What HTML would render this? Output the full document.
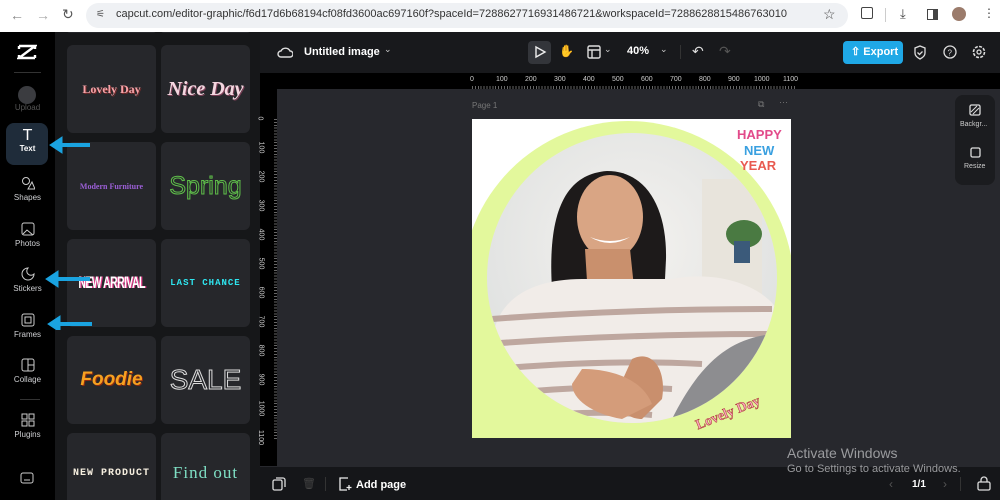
<!DOCTYPE html>
<html><head><meta charset="utf-8"><style>
*{margin:0;padding:0;box-sizing:border-box}
html,body{width:1000px;height:500px;overflow:hidden}
body{background:#27282d;font-family:"Liberation Sans",sans-serif;position:relative}
.a{position:absolute}
.card{position:absolute;width:89px;height:88px;background:#26272b;border-radius:6px;display:flex;align-items:center;justify-content:center;font-weight:bold;white-space:nowrap;overflow:hidden}
.nav{position:absolute;left:0;width:55px;text-align:center;color:#cfd0d3;font-size:8px}
.nav svg{display:block;margin:0 auto 3px}
.rh{position:absolute;top:76px;font-size:7px;color:#ccc}
.rv{position:absolute;left:258px;font-size:7px;color:#ccc;transform:rotate(90deg);transform-origin:center}
</style></head><body>
<!-- left nav -->
<div class="a" style="left:0;top:32px;width:55px;height:468px;background:#000"></div>
<svg class="a" style="left:17px;top:44px" width="20" height="16" viewBox="0 0 20 16"><path d="M2 2h16L2 14h16" stroke="#fff" stroke-width="2.4" fill="none"/><path d="M2 2v3M18 14v-3M18 2v3M2 14v-3" stroke="#fff" stroke-width="2.4"/></svg>
<div class="a" style="left:14px;top:72px;width:27px;height:1px;background:#333"></div>
<div class="a" style="left:18px;top:86px;width:18px;height:18px;border-radius:50%;background:#3b3c40"></div>
<div class="nav" style="top:103px;color:#555">Upload</div>
<div class="a" style="left:6px;top:123px;width:42px;height:42px;border-radius:8px;background:#1f2c3a"></div>
<div class="nav" style="top:128px;color:#fff;font-size:8px"><div style="font-size:16px;line-height:16px">T</div><b>Text</b></div>
<div class="nav" style="top:176px"><svg width="14" height="14"><circle cx="5" cy="5" r="3.5" stroke="#ccc" fill="none"/><path d="M7 13l4-7 3 7z" stroke="#ccc" fill="none"/></svg>Shapes</div>
<div class="nav" style="top:222px"><svg width="14" height="14"><rect x="1" y="1" width="12" height="12" rx="2" stroke="#ccc" fill="none"/><path d="M2 12l4-4 6 5" stroke="#ccc" fill="none"/></svg>Photos</div>
<div class="nav" style="top:267px"><svg width="14" height="14"><path d="M7 1a6 6 0 1 0 6 6a4 4 0 0 1-6-6z" stroke="#ccc" fill="none"/></svg>Stickers</div>
<div class="nav" style="top:313px"><svg width="14" height="14"><rect x="1" y="1" width="12" height="12" rx="2" stroke="#ccc" fill="none"/><rect x="4" y="4" width="6" height="6" stroke="#ccc" fill="none"/></svg>Frames</div>
<div class="nav" style="top:358px"><svg width="14" height="14"><rect x="1" y="1" width="12" height="12" rx="2" stroke="#ccc" fill="none"/><path d="M7 1v12M7 7h6" stroke="#ccc"/></svg>Collage</div>
<div class="a" style="left:20px;top:399px;width:20px;height:1px;background:#333"></div>
<div class="nav" style="top:413px"><svg width="14" height="14"><rect x="1" y="1" width="5" height="5" stroke="#ccc" fill="none"/><rect x="8" y="1" width="5" height="5" stroke="#ccc" fill="none"/><rect x="1" y="8" width="5" height="5" stroke="#ccc" fill="none"/><rect x="8" y="8" width="5" height="5" stroke="#ccc" fill="none"/></svg>Plugins</div>
<svg class="a" style="left:20px;top:472px" width="14" height="12"><rect x="1" y="1" width="12" height="10" rx="2" stroke="#ccc" fill="none"/><path d="M4 8h6" stroke="#ccc"/></svg>
<!-- panel -->
<div class="a" style="left:55px;top:32px;width:205px;height:468px;background:#161719"></div>
<div class="card" style="left:67px;top:28px;height:5px"></div><div class="card" style="left:161px;top:28px;height:5px"></div>
<div class="card" style="left:67px;top:45px;color:#f5a3a8;font-family:'Liberation Serif',serif;font-size:12px;text-shadow:1px 1px 0 #7a2a2a">Lovely Day</div>
<div class="card" style="left:161px;top:45px;color:#f4d7e0;font-family:'Liberation Serif',serif;font-style:italic;font-size:20px;text-shadow:1px 1px 0 #7b3e56">Nice Day</div>
<div class="card" style="left:67px;top:142px;color:#9b5fd6;font-family:'Liberation Serif',serif;font-size:8px">Modern Furniture</div>
<div class="card" style="left:161px;top:142px;color:transparent;-webkit-text-stroke:1px #5fbf4a;font-size:25px;font-weight:normal">Spring</div>
<div class="card" style="left:67px;top:239px;color:#fff;font-size:17px"><span style="display:inline-block;transform:scaleX(.62);letter-spacing:-1px;text-shadow:2px 0 0 #e23b8a">NEW ARRIVAL</span></div>
<div class="card" style="left:161px;top:239px;color:#2ee6f0;font-size:9px;letter-spacing:1px;font-family:'Liberation Mono',monospace">LAST CHANCE</div>
<div class="card" style="left:67px;top:336px;color:#f6a020;font-size:19px;font-style:italic;text-shadow:1px 1px 0 #8b2a10">Foodie</div>
<div class="card" style="left:161px;top:336px;color:transparent;-webkit-text-stroke:1px #ddd;font-size:28px;font-weight:normal">SALE</div>
<div class="card" style="left:67px;top:433px;height:80px;color:#f6efe0;font-size:10px;letter-spacing:1px;font-family:'Liberation Mono',monospace">NEW PRODUCT</div>
<div class="card" style="left:161px;top:433px;height:80px;color:#7fe0c5;font-size:17px;font-weight:normal;font-family:'Liberation Serif',serif;letter-spacing:1px">Find out</div>
<!-- arrows -->
<svg class="a" style="left:40px;top:130px" width="60" height="200"><g fill="#1aa3e0" stroke="#1aa3e0"><path d="M50 15H16" stroke-width="4"/><path d="M10 15l12-8v16z"/><path d="M50 149H14" stroke-width="4"/><path d="M6 149l12-8v16z"/><path d="M52 194H16" stroke-width="4"/><path d="M8 194l12-8v16z"/></g></svg>
<!-- chrome bar -->
<div class="a" style="left:0;top:0;width:1000px;height:32px;background:#fff"></div>
<div class="a" style="left:10px;top:7px;font-size:14px;color:#888">←</div>
<div class="a" style="left:36px;top:7px;font-size:14px;color:#aaa">→</div>
<div class="a" style="left:62px;top:6px;font-size:14px;color:#555">↻</div>
<div class="a" style="left:86px;top:3px;width:762px;height:25px;background:#eff1f4;border-radius:13px"></div>
<div class="a" style="left:96px;top:9px;font-size:10px;color:#555">⚟</div>
<div class="a" style="left:116px;top:8px;font-size:11px;color:#333">capcut.com/editor-graphic/f6d17d6b68194cf08fd3600ac697160f?spaceId=7288627716931486721&amp;workspaceId=7288628815486763010</div>
<div class="a" style="left:823px;top:6px;font-size:14px;color:#444">☆</div>
<div class="a" style="left:861px;top:7px;width:12px;height:12px;border:1.5px solid #444;border-radius:2px"></div>
<div class="a" style="left:885px;top:8px;width:1px;height:14px;background:#ccc"></div>
<div class="a" style="left:900px;top:6px;font-size:13px;color:#444">⤓</div>
<div class="a" style="left:927px;top:9px;width:11px;height:11px;border:1.5px solid #444;border-right:5px solid #444"></div>
<div class="a" style="left:952px;top:7px;width:14px;height:14px;border-radius:50%;background:#9b7b6b"></div>
<div class="a" style="left:983px;top:6px;font-size:12px;color:#444">⋮</div>
<!-- top toolbar -->
<div class="a" style="left:260px;top:32px;width:740px;height:41px;background:#18191c"></div>
<svg class="a" style="left:277px;top:45px" width="16" height="14"><path d="M4 12h9a3 3 0 0 0 0-6 5 5 0 0 0-9 0 3 3 0 0 0 0 6z" stroke="#ddd" fill="none" stroke-width="1.4"/></svg>
<div class="a" style="left:304px;top:46px;color:#fff;font-size:11px;font-weight:bold">Untitled image</div>
<div class="a" style="left:384px;top:44px;color:#ccc;font-size:9px">⌄</div>
<div class="a" style="left:528px;top:41px;width:23px;height:23px;background:#33353a;border-radius:4px"></div>
<svg class="a" style="left:533px;top:45px" width="14" height="14"><path d="M3 2l9 5-9 5z" stroke="#eee" fill="none" stroke-width="1.4"/></svg>
<div class="a" style="left:559px;top:44px;color:#ddd;font-size:12px">✋</div>
<svg class="a" style="left:587px;top:45px" width="14" height="14"><rect x="1" y="1" width="12" height="12" rx="1.5" stroke="#ddd" fill="none" stroke-width="1.4"/><path d="M1 5h12M5 5v8" stroke="#ddd" stroke-width="1.4"/></svg>
<div class="a" style="left:604px;top:44px;color:#ccc;font-size:9px">⌄</div>
<div class="a" style="left:627px;top:45px;color:#fff;font-size:11px;font-weight:bold">40%</div>
<div class="a" style="left:660px;top:44px;color:#ccc;font-size:9px">⌄</div>
<div class="a" style="left:680px;top:45px;width:1px;height:14px;background:#333"></div>
<div class="a" style="left:692px;top:43px;color:#ddd;font-size:14px">↶</div>
<div class="a" style="left:719px;top:43px;color:#555;font-size:14px">↷</div>
<div class="a" style="left:843px;top:41px;width:60px;height:23px;background:#1fa8e6;border-radius:4px;color:#fff;font-size:11px;font-weight:bold;line-height:23px;padding-left:8px">⇧ Export</div>
<svg class="a" style="left:913px;top:45px" width="14" height="15"><path d="M7 1l5 2v5c0 3-3 5-5 6-2-1-5-3-5-6V3z M4.5 7.5l2 2 3-3" stroke="#ddd" fill="none" stroke-width="1.3"/></svg>
<svg class="a" style="left:943px;top:45px" width="14" height="14"><circle cx="7" cy="7" r="6" stroke="#ddd" fill="none" stroke-width="1.3"/><text x="4.5" y="10.5" font-size="8" fill="#ddd" font-family="Liberation Sans">?</text></svg>
<svg class="a" style="left:972px;top:45px" width="14" height="14"><circle cx="7" cy="7" r="5.5" stroke="#ddd" fill="none" stroke-width="1.6" stroke-dasharray="3 1.3"/><circle cx="7" cy="7" r="2" stroke="#ddd" fill="none" stroke-width="1.3"/></svg>
<!-- rulers -->
<div class="a" style="left:260px;top:73px;width:740px;height:16px;background:#000"></div>
<div class="a" style="left:260px;top:73px;width:17px;height:393px;background:#000"></div>
<div class="a" style="left:472px;top:86px;width:325px;height:3px;background:repeating-linear-gradient(90deg,#666 0 1px,transparent 1px 2.9px)"></div>
<div class="a" style="left:274px;top:119px;width:3px;height:320px;background:repeating-linear-gradient(180deg,#666 0 1px,transparent 1px 2.9px)"></div>
<div class="rh" style="left:470px">0</div><div class="rh" style="left:496px">100</div><div class="rh" style="left:525px">200</div><div class="rh" style="left:554px">300</div><div class="rh" style="left:583px">400</div><div class="rh" style="left:612px">500</div><div class="rh" style="left:641px">600</div><div class="rh" style="left:670px">700</div><div class="rh" style="left:699px">800</div><div class="rh" style="left:728px">900</div><div class="rh" style="left:754px">1000</div><div class="rh" style="left:783px">1100</div>
<div class="rv" style="top:115px">0</div><div class="rv" style="top:144px;left:255px">100</div><div class="rv" style="top:173px;left:255px">200</div><div class="rv" style="top:202px;left:255px">300</div><div class="rv" style="top:231px;left:255px">400</div><div class="rv" style="top:260px;left:255px">500</div><div class="rv" style="top:289px;left:255px">600</div><div class="rv" style="top:318px;left:255px">700</div><div class="rv" style="top:347px;left:255px">800</div><div class="rv" style="top:376px;left:255px">900</div><div class="rv" style="top:405px;left:253px">1000</div><div class="rv" style="top:434px;left:253px">1100</div>
<!-- page -->
<div class="a" style="left:472px;top:101px;font-size:8px;color:#777">Page 1</div>
<div class="a" style="left:758px;top:99px;font-size:9px;color:#777">⧉</div>
<div class="a" style="left:779px;top:97px;font-size:9px;color:#777">···</div>
<svg class="a" style="left:472px;top:119px" width="319" height="319" viewBox="0 0 319 319">
<defs><clipPath id="c"><circle cx="160" cy="159" r="145"/></clipPath>
<radialGradient id="bg" cx=".5" cy=".4" r=".7"><stop offset="0" stop-color="#f4f2ef"/><stop offset="1" stop-color="#d9dcdc"/></radialGradient></defs>
<rect width="319" height="319" fill="#fff"/>
<circle cx="156" cy="168" r="166" fill="#e3f89c"/>
<rect x="0" y="168" width="319" height="151" fill="#e3f89c"/>
<g clip-path="url(#c)">
<rect width="319" height="319" fill="url(#bg)"/>
<rect x="230" y="60" width="60" height="120" fill="#e8e4dc"/>
<ellipse cx="272" cy="115" rx="18" ry="14" fill="#4a7a42"/>
<rect x="262" y="122" width="16" height="22" fill="#3b5a7a"/>
<path d="M80 170 C75 90 95 55 135 52 C175 52 195 90 194 140 L192 180 L85 180Z" fill="#1d1a1a"/>
<ellipse cx="138" cy="98" rx="33" ry="42" fill="#d9a584"/>
<path d="M118 118 q20 12 40 0 q-20 8 -40 0z" fill="#fff"/>
<path d="M113 130 L158 130 L163 178 L116 178Z" fill="#c9906d"/>
<path d="M20 230 C20 180 60 160 110 160 L200 160 C250 150 300 170 310 200 L300 260 L200 300 L60 319 L10 319Z" fill="#f1ece8"/>
<g stroke="#b8a097" stroke-width="6" fill="none" opacity=".9"><path d="M20 200 Q150 190 300 190"/><path d="M15 225 Q150 215 300 215"/><path d="M20 250 Q140 240 230 245"/><path d="M30 275 Q120 265 200 270"/><path d="M40 300 Q110 290 180 296"/></g>
<path d="M200 300 C230 240 260 220 300 215 L320 319 L180 319Z" fill="#8d8d90"/>
<path d="M160 240 C180 230 195 250 190 280 L170 300 C150 300 140 280 150 262Z" fill="#c98f6d"/>
<path d="M110 250 C140 250 170 260 180 285 L150 300 C120 295 100 280 100 265Z" fill="#d49c7a"/>
</g>
<text x="265" y="20" font-family="Liberation Sans" font-weight="bold" font-size="13" fill="#e24a8a">HAPPY</text>
<text x="272" y="36" font-family="Liberation Sans" font-weight="bold" font-size="13" fill="#3aa0e0">NEW</text>
<text x="268" y="51" font-family="Liberation Sans" font-weight="bold" font-size="13" fill="#e85a50">YEAR</text>
<text x="220" y="300" font-family="Liberation Serif" font-weight="bold" font-size="14" fill="#f7a5b8" stroke="#a33" stroke-width=".5" transform="rotate(-22 250 290)">Lovely Day</text>
</svg>
<!-- right panel -->
<div class="a" style="left:955px;top:95px;width:40px;height:90px;background:#1b1c1f;border-radius:8px"></div>
<svg class="a" style="left:969px;top:104px" width="12" height="12"><rect x="1" y="1" width="10" height="10" rx="1.5" stroke="#ddd" fill="none" stroke-width="1.3"/><path d="M2 8l6-6M4 10l6-6" stroke="#ddd"/></svg>
<div class="a" style="left:960px;top:121px;font-size:7px;color:#ccc">Backgr...</div>
<svg class="a" style="left:969px;top:146px" width="12" height="12"><rect x="2" y="2" width="9" height="9" rx="1.5" stroke="#ddd" fill="none" stroke-width="1.3"/></svg>
<div class="a" style="left:964px;top:163px;font-size:7px;color:#ccc">Resize</div>
<!-- bottom bar -->
<div class="a" style="left:260px;top:467px;width:740px;height:33px;background:#151619"></div>
<svg class="a" style="left:272px;top:477px" width="14" height="14"><rect x="1" y="3" width="9" height="10" rx="1.5" stroke="#ddd" fill="none" stroke-width="1.3"/><path d="M4 1h7a2 2 0 0 1 2 2v7" stroke="#ddd" fill="none" stroke-width="1.3"/></svg>
<div class="a" style="left:302px;top:477px;font-size:11px;color:#444">🗑</div>
<div class="a" style="left:325px;top:477px;width:1px;height:14px;background:#333"></div>
<svg class="a" style="left:338px;top:477px" width="14" height="14"><path d="M10 1H2v12h7M11 8v5M8.5 10.5h5" stroke="#eee" fill="none" stroke-width="1.3"/></svg>
<div class="a" style="left:356px;top:479px;font-size:11px;color:#fff;font-weight:bold">Add page</div>
<div class="a" style="left:889px;top:477px;font-size:12px;color:#555">‹</div>
<div class="a" style="left:912px;top:479px;font-size:10px;color:#fff;font-weight:bold">1/1</div>
<div class="a" style="left:943px;top:477px;font-size:12px;color:#555">›</div>
<div class="a" style="left:960px;top:477px;width:1px;height:14px;background:#333"></div>
<svg class="a" style="left:977px;top:476px" width="14" height="15"><rect x="1" y="6" width="12" height="8" rx="1.5" stroke="#ddd" fill="none" stroke-width="1.3"/><path d="M4 6V4a3 3 0 0 1 6 0v2" stroke="#ddd" fill="none" stroke-width="1.3"/></svg>
<!-- watermark -->
<div class="a" style="left:787px;top:445px;font-size:14px;color:#9a9b9e">Activate Windows</div>
<div class="a" style="left:787px;top:463px;font-size:11px;color:#9a9b9e">Go to Settings to activate Windows.</div>
</body></html>
